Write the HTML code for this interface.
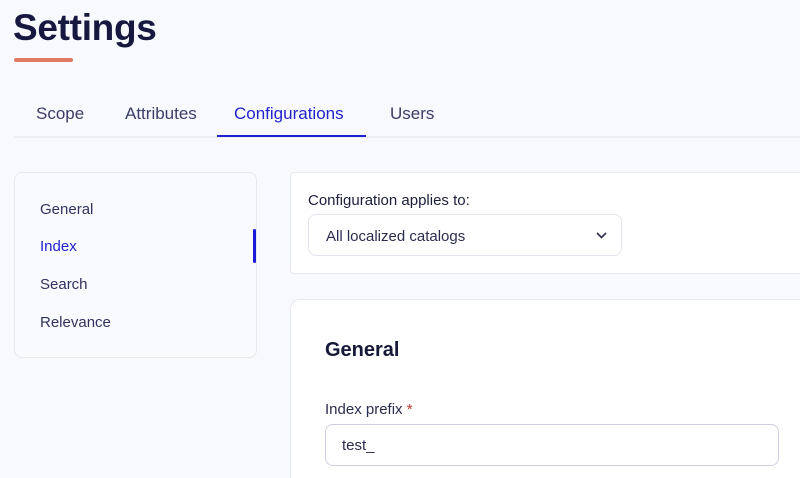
<!DOCTYPE html>
<html><head><style>
*{margin:0;padding:0;box-sizing:border-box}
html,body{width:800px;height:478px;overflow:hidden}
body{background:#f8f9fd;font-family:"Liberation Sans",sans-serif;position:relative;color:#2a2d5a}
.a{position:absolute;white-space:nowrap}
</style></head><body>
<div class="a" style="left:13px;top:7px;font-size:37px;font-weight:bold;color:#161840;letter-spacing:-0.3px">Settings</div>
<div class="a" style="left:14px;top:58px;width:59px;height:4px;border-radius:2px;background:#e07a63"></div>
<div class="a" style="left:14px;top:136px;width:786px;height:2px;background:#eceef3"></div>
<div class="a" style="left:36px;top:104px;font-size:17px;color:#3a3d66">Scope</div>
<div class="a" style="left:125px;top:104px;font-size:17px;color:#3a3d66">Attributes</div>
<div class="a" style="left:234px;top:104px;font-size:17px;color:#2222cc">Configurations</div>
<div class="a" style="left:390px;top:104px;font-size:17px;color:#3a3d66">Users</div>
<div class="a" style="left:217px;top:135px;width:149px;height:2px;background:#2020d0"></div>

<div class="a" style="left:14px;top:172px;width:243px;height:186px;border:1px solid #e6e8f0;border-radius:8px;background:#f9fafe"></div>
<div class="a" style="left:40px;top:201px;font-size:15px;color:#2f325e">General</div>
<div class="a" style="left:40px;top:238px;font-size:15px;color:#2222cc">Index</div>
<div class="a" style="left:40px;top:276px;font-size:15px;color:#2f325e">Search</div>
<div class="a" style="left:40px;top:314px;font-size:15px;color:#2f325e">Relevance</div>
<div class="a" style="left:253px;top:229px;width:3px;height:34px;border-radius:2px;background:#1a1ad6"></div>

<div class="a" style="left:290px;top:172px;width:520px;height:102px;border:1px solid #e8eaf1;border-radius:4px;background:#fff"></div>
<div class="a" style="left:308px;top:192px;font-size:15px;color:#1c1e3c">Configuration applies to:</div>
<div class="a" style="left:308px;top:214px;width:314px;height:42px;border:1px solid #e3e5ee;border-radius:8px;background:#fff"></div>
<div class="a" style="left:326px;top:228px;font-size:15px;color:#2a2c4e">All localized catalogs</div>
<svg class="a" style="left:595px;top:230px" width="13" height="10" viewBox="0 0 13 10"><path d="M2 3l4.5 4.5L11 3" fill="none" stroke="#2a2c4e" stroke-width="1.6"/></svg>

<div class="a" style="left:290px;top:299px;width:520px;height:190px;border:1px solid #e8eaf1;border-radius:10px;background:#fff"></div>
<div class="a" style="left:325px;top:339px;font-size:20px;font-weight:bold;color:#161838">General</div>
<div class="a" style="left:325px;top:401px;font-size:15px;color:#2a2c4e">Index prefix <span style="color:#c0392b">*</span></div>
<div class="a" style="left:325px;top:424px;width:454px;height:42px;border:1px solid #cfd0e6;border-radius:8px;background:#fff"></div>
<div class="a" style="left:342px;top:437px;font-size:15px;color:#2a2c4e">test_</div>
</body></html>
